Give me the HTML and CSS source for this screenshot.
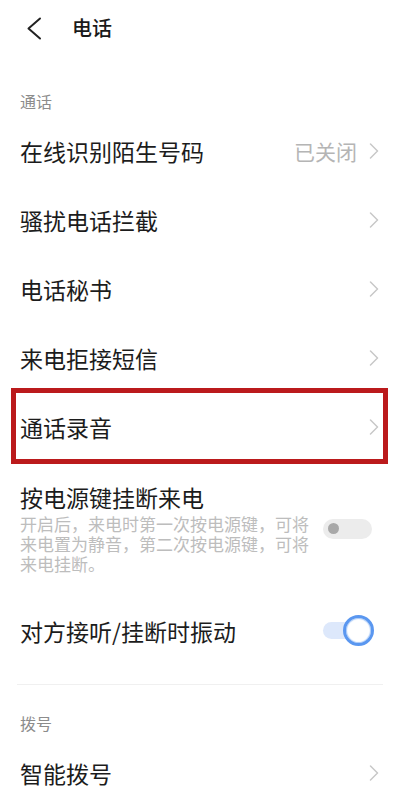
FILE: index.html
```html
<!DOCTYPE html>
<html lang="zh-CN">
<head>
<meta charset="utf-8">
<title>电话</title>
<link rel="stylesheet" href="styles.css">
</head>
<body>
<div class="page">
  <header class="header">
    <svg class="back" width="16" height="23" viewBox="0 0 16 23"><polyline points="14,1.5 2.5,11.5 14,21.5" fill="none" stroke="#222" stroke-width="2" stroke-linecap="round" stroke-linejoin="round"/></svg>
    <h1 class="title">电话</h1>
  </header>

  <section class="group">
    <div class="group-label">通话</div>
    <div class="row">
      <span class="row-title">在线识别陌生号码</span>
      <span class="row-value">已关闭</span>
      <svg class="chev" width="10" height="16" viewBox="0 0 10 16"><polyline points="1.5,1 8.5,8 1.5,15" fill="none" stroke="#c8c8c8" stroke-width="1.5" stroke-linecap="round" stroke-linejoin="round"/></svg>
    </div>
    <div class="row">
      <span class="row-title">骚扰电话拦截</span>
      <svg class="chev" width="10" height="16" viewBox="0 0 10 16"><polyline points="1.5,1 8.5,8 1.5,15" fill="none" stroke="#c8c8c8" stroke-width="1.5" stroke-linecap="round" stroke-linejoin="round"/></svg>
    </div>
    <div class="row">
      <span class="row-title">电话秘书</span>
      <svg class="chev" width="10" height="16" viewBox="0 0 10 16"><polyline points="1.5,1 8.5,8 1.5,15" fill="none" stroke="#c8c8c8" stroke-width="1.5" stroke-linecap="round" stroke-linejoin="round"/></svg>
    </div>
    <div class="row">
      <span class="row-title">来电拒接短信</span>
      <svg class="chev" width="10" height="16" viewBox="0 0 10 16"><polyline points="1.5,1 8.5,8 1.5,15" fill="none" stroke="#c8c8c8" stroke-width="1.5" stroke-linecap="round" stroke-linejoin="round"/></svg>
    </div>
    <div class="row row-marked">
      <span class="row-title">通话录音</span>
      <svg class="chev" width="10" height="16" viewBox="0 0 10 16"><polyline points="1.5,1 8.5,8 1.5,15" fill="none" stroke="#c8c8c8" stroke-width="1.5" stroke-linecap="round" stroke-linejoin="round"/></svg>
    </div>
    <div class="row row-tall">
      <div class="row-text">
        <div class="row-title row-title-block">按电源键挂断来电</div>
        <div class="row-desc">开启后，来电时第一次按电源键，可将来电置为静音，第二次按电源键，可将来电挂断。</div>
      </div>
      <div class="switch switch-off"><span class="switch-dot"></span></div>
    </div>
    <div class="row">
      <span class="row-title">对方接听/挂断时振动</span>
      <div class="switch-on"><span class="switch-track"></span><span class="switch-knob"></span></div>
    </div>
  </section>

  <div class="divider"></div>

  <section class="group">
    <div class="group-label group-label-2">拨号</div>
    <div class="row">
      <span class="row-title">智能拨号</span>
      <svg class="chev" width="10" height="16" viewBox="0 0 10 16"><polyline points="1.5,1 8.5,8 1.5,15" fill="none" stroke="#c8c8c8" stroke-width="1.5" stroke-linecap="round" stroke-linejoin="round"/></svg>
    </div>
  </section>
</div>
</body>
</html>
```

FILE: styles.css
```css
html, body {
  margin: 0;
  padding: 0;
  background: #ffffff;
}

body {
  font-family: "Noto Sans CJK SC", "Noto Sans", sans-serif;
  color: #1c1c1c;
}

.page {
  width: 400px;
  height: 789px;
  overflow: hidden;
}

.header {
  height: 56px;
  display: flex;
  align-items: center;
  padding-left: 26px;
  box-sizing: border-box;
}

.back {
  display: block;
  margin-top: 1px;
}

.title {
  margin: 0 0 0 30px;
  font-size: 20px;
  font-weight: 500;
  line-height: 28px;
  color: #1a1a1a;
}

.group-label {
  padding: 34px 20px 4px;
  font-size: 16px;
  line-height: 22px;
  color: #8c8c8c;
}

.group-label-2 {
  padding-top: 27px;
}

.row {
  height: 69px;
  display: flex;
  align-items: center;
  padding: 0 21px 0 20px;
  box-sizing: border-box;
}

.row-title {
  flex: 1;
  font-size: 23px;
  line-height: 30px;
  color: #1c1c1c;
}

.row-value {
  font-size: 21px;
  line-height: 30px;
  color: #b5b5b5;
  margin-right: 12px;
}

.chev {
  display: block;
  flex: none;
}

.row-marked {
  position: relative;
}

.row-marked::after {
  content: "";
  position: absolute;
  left: 11px;
  right: 12px;
  top: -4px;
  height: 76px;
  border: 5px solid #bb1a1c;
  box-sizing: border-box;
}

.row-tall {
  height: auto;
  padding-top: 22px;
  padding-bottom: 22px;
}

.row-text {
  flex: 1;
}

.row-title-block {
  display: block;
  line-height: 28px;
}

.row-desc {
  width: 296px;
  margin-top: 3px;
  font-size: 17px;
  line-height: 20px;
  color: #bdbdbd;
}

.switch {
  flex: none;
  width: 49px;
  height: 20px;
  border-radius: 10px;
  margin-right: 7px;
  display: flex;
  align-items: center;
}

.switch-off {
  background: #ececec;
}

.switch-dot {
  width: 11px;
  height: 11px;
  border-radius: 50%;
  background: #a8a8a8;
  margin-left: 5px;
}

.switch-on {
  flex: none;
  position: relative;
  width: 51px;
  height: 31px;
  margin-right: 5px;
  display: flex;
  align-items: center;
}

.switch-track {
  width: 42px;
  height: 17px;
  border-radius: 9px;
  background: #dde8fb;
}

.switch-knob {
  position: absolute;
  right: 0;
  top: 0;
  width: 31px;
  height: 31px;
  border-radius: 50%;
  box-sizing: border-box;
  border: 3px solid #5a97f0;
  background: #ffffff;
  box-shadow: inset 0 0 1px 1px #a9c9f7;
}

.divider {
  height: 1px;
  background: #f0f0f0;
  margin: 19px 17px 0;
}
```
